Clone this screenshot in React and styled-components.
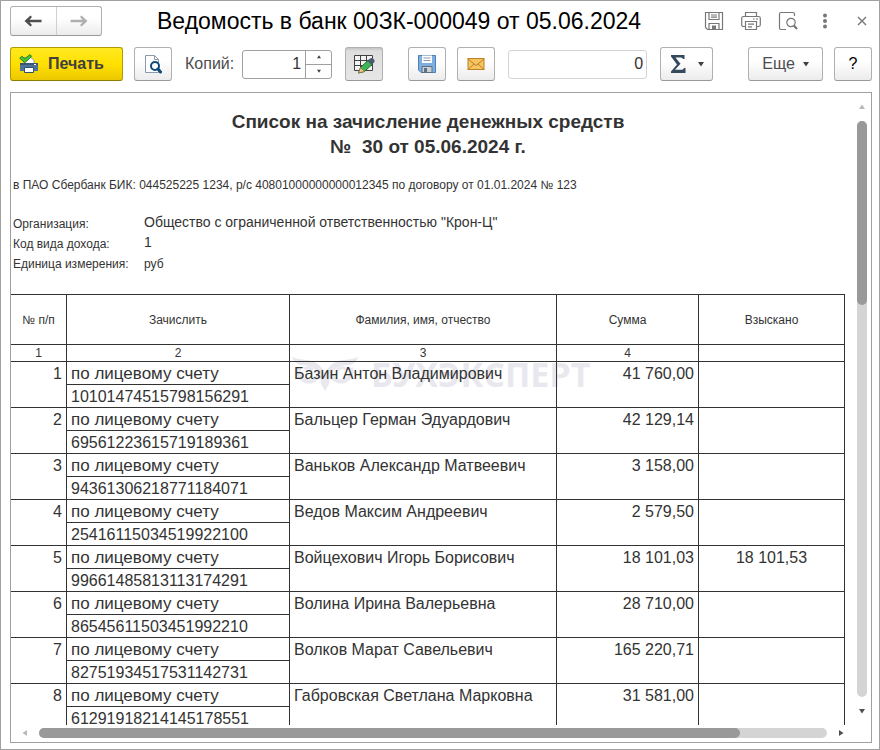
import React, { useState } from "react";
import styled, { createGlobalStyle } from "styled-components";

const rows = [
  { name: "Базин Антон Владимирович", account: "10101474515798156291", sum: "41 760,00" },
  { name: "Бальцер Герман Эдуардович", account: "69561223615719189361", sum: "42 129,14" },
  { name: "Ваньков Александр Матвеевич", account: "94361306218771184071", sum: "3 158,00" },
  { name: "Ведов Максим Андреевич", account: "25416115034519922100", sum: "2 579,50" },
  { name: "Войцехович Игорь Борисович", account: "99661485813113174291", sum: "18 101,03", held: "18 101,53" },
  { name: "Волина Ирина Валерьевна", account: "86545611503451992210", sum: "28 710,00" },
  { name: "Волков Марат Савельевич", account: "82751934517531142731", sum: "165 220,71" },
  { name: "Габровская Светлана Марковна", account: "61291918214145178551", sum: "31 581,00" },
];

const ArrowIcon = ({ flip, color }) => (
  <svg width="18" height="12" viewBox="0 0 18 12">
    <g transform={flip ? "translate(18 0) scale(-1 1)" : undefined}>
      <path d="M0.500 6 6.500 0.500 8 2 5.500 4.700H17.500V7.300H5.500L8 10 6.500 11.500Z" fill={color} />
    </g>
  </svg>
);

const PrintIcon = () => (
  <svg width="20" height="20" viewBox="0 0 20 20">
    <path d="M5 3.500h7l3 3v3H5z" fill="#fff" stroke="#9a9a9a" />
    <path d="M1 9h17a1 1 0 0 1 1 1v7H1z" fill="#4f7299" />
    <path d="M1 9h17a1 1 0 0 1 1 1v1H1z" fill="#3a5676" />
    <path d="M15 10h2v1h-2z" fill="#fff" />
    <path d="M5.500 13.500h9v5h-9z" fill="#fff" stroke="#33506f" />
    <path d="M.7 4.200 2.800 2.200l3 2.500L11 .6l1.700 1.800-6.800 6.300z" fill="#4fc232" stroke="#26821a" />
  </svg>
);

const PreviewIcon = () => (
  <svg width="18" height="20" viewBox="0 0 18 20">
    <path d="M1.500 1.500h9l4 4v13h-13z" fill="#fff" stroke="#8c99a8" />
    <path d="M10.500 1.500v4h4" fill="none" stroke="#8c99a8" />
    <circle cx="11" cy="12" r="4" fill="#fff" stroke="#0d4a7a" strokeWidth="2" />
    <path d="m14 15 2.500 3" stroke="#0d4a7a" strokeWidth="3" strokeLinecap="round" />
  </svg>
);

const EditTableIcon = () => (
  <svg width="22" height="20" viewBox="0 0 22 20">
    <path d="M1.500 1.500h18v15h-18z" fill="#f3f3f3" stroke="#404040" />
    <path d="M1.500 6.500h18M1.500 11.500h18M7.500 1.500v15M13.500 1.500v15" stroke="#404040" />
    <path d="m5.500 19 2-5.500 8-7.500 4 4-8 7.500z" fill="#3fb653" stroke="#1f6b33" />
    <path d="m5.500 19 2-5.500 4 4z" fill="#edc58d" stroke="#94693a" strokeWidth=".7" />
    <path d="m14.500 7 2.500-2.500q1.500-1 3.500.5t.5 3.500L18.500 11z" fill="#4b5a6c" />
  </svg>
);

const FloppyIcon = () => (
  <svg width="20" height="20" viewBox="0 0 20 20">
    <path d="M1.500 1.500h17v17H4l-2.500-2.500z" fill="#7faee0" stroke="#4f7fb5" />
    <path d="M5 1.500h10V9H5z" fill="#fff" />
    <path d="M6.500 4h7M6.500 6.500h7" stroke="#8a9aae" />
    <path d="M5 12.500h10v6H5z" fill="#c9d0d6" stroke="#5a7083" />
    <path d="M7 14h3v4H7z" fill="#5a7083" />
  </svg>
);

const MailIcon = () => (
  <svg width="18" height="14" viewBox="0 0 18 14">
    <rect x="1" y="1.500" width="16" height="11" fill="#f6c561" stroke="#bd7f24" />
    <path d="m1 2 8 6.500L17 2M1 12.500l6-5.500M17 12.500 11 7" fill="none" stroke="#bd7f24" />
  </svg>
);

const SigmaIcon = () => (
  <svg width="16" height="20" viewBox="0 0 16 20">
    <path d="M1 1h13.500v4H13q-.4-1.500-2-1.500H5.500l5 6.200-5.500 6h7q1.500 0 2-1.700h1.500V19H1v-1.500l6-7L1 2.500z" fill="#34495e" />
  </svg>
);

const OutlineFloppy = () => (
  <svg width="20" height="20" viewBox="0 0 20 20" fill="none" stroke="#777">
    <path d="M1.500 1.500h17v17H3.500l-2-2zM5 1.500v7h10v-7M7 4h6M7 6.200h6M5 18.500v-6h10v6" strokeWidth="1.200" />
    <path d="M8 14.500h4V18H8z" fill="#777" stroke="none" />
  </svg>
);

const OutlinePrinter = () => (
  <svg width="20" height="20" viewBox="0 0 20 20" fill="none" stroke="#777" strokeWidth="1.200">
    <path d="M4.500 5.500v-4h11v4M4.500 15.500h-2q-1.800 0-1.800-1.800V7.300q0-1.800 1.800-1.800h15q1.800 0 1.800 1.800v6.400q0 1.800-1.800 1.800h-2M4.500 10.500h11v8h-11zM7 13.200h6M7 15.800h4M12 8h1.500M15 8h2" />
  </svg>
);

const OutlinePreview = () => (
  <svg width="20" height="20" viewBox="0 0 20 20" fill="none" stroke="#777" strokeWidth="1.200">
    <path d="M8 18.500H3q-1.500 0-1.500-1.500V3q0-1.500 1.500-1.500h12q1.500 0 1.500 1.500v2" />
    <circle cx="13" cy="11.500" r="4.200" />
    <path d="m15.800 14.500 3.200 3.500" strokeWidth="2.200" />
  </svg>
);

const DotsIcon = () => (
  <svg width="6" height="16" viewBox="0 0 6 16" fill="#777">
    <circle cx="3" cy="2.500" r="2" />
    <circle cx="3" cy="8" r="2" />
    <circle cx="3" cy="13.500" r="2" />
  </svg>
);

const CloseIcon = () => (
  <svg width="10" height="10" viewBox="0 0 10 10">
    <path d="m1 1 8 8M9 1 1 9" stroke="#777" strokeWidth="1.400" />
  </svg>
);

const OwlLogo = () => (
  <svg width="68" height="36" viewBox="0 0 68 36">
    <g fill="#e8e8ee">
      <path d="M1 1q7 3 14 3 14 1 19 14Q39 5 53 4q7 0 14-3-2 6-8 8-14-1-20 11l-1 8-4 7-4-7-1-8Q23 8 9 9 3 7 1 1Z" />
    </g>
    <g fill="none" stroke="#e8e8ee" strokeWidth="4">
      <path d="M8 12a10 10 0 1 0 20 6" />
      <path d="M60 12a10 10 0 1 1-20 6" />
      <path d="M13 13q4-3 9 1M55 13q-4-3-9 1" strokeWidth="3" />
    </g>
  </svg>
);

const Triangle = ({ dir = "down", color = "#404040", size = 6 }) => {
  const turn = { down: 0, left: 90, up: 180, right: 270 }[dir];
  return (
    <svg width={size} height={size} viewBox="0 0 6 6">
      <path d="M0 1h6L3 5.500z" fill={color} transform={`rotate(${turn} 3 3)`} />
    </svg>
  );
};

const App = () => {
  const [copies, setCopies] = useState(1);

  return (
    <Window>
      <GlobalStyle />
      <TitleBar>
        <NavGroup>
          <NavButton aria-label="Назад">
            <ArrowIcon color="#4d4d4d" />
          </NavButton>
          <NavButton aria-label="Вперед">
            <ArrowIcon flip color="#b0b0b0" />
          </NavButton>
        </NavGroup>
        <Title>Ведомость в банк 00ЗК-000049 от 05.06.2024</Title>
        <WindowActions>
          <IconButton aria-label="Сохранить"><OutlineFloppy /></IconButton>
          <IconButton aria-label="Печать"><OutlinePrinter /></IconButton>
          <IconButton aria-label="Просмотр"><OutlinePreview /></IconButton>
          <IconButton aria-label="Меню"><DotsIcon /></IconButton>
          <IconButton aria-label="Закрыть"><CloseIcon /></IconButton>
        </WindowActions>
      </TitleBar>

      <Toolbar>
        <PrintButton>
          <PrintIcon />
          Печать
        </PrintButton>
        <ToolButton $width={38} aria-label="Предварительный просмотр">
          <PreviewIcon />
        </ToolButton>
        <CopiesLabel htmlFor="copies">Копий:</CopiesLabel>
        <Stepper>
          <StepperInput
            id="copies"
            value={copies}
            onChange={(e) => setCopies(parseInt(e.target.value) || 0)}
          />
          <StepperButtons>
            <StepButton aria-label="Больше" onClick={() => setCopies(copies + 1)}>
              <Triangle dir="up" size={4} />
            </StepButton>
            <StepButton aria-label="Меньше" onClick={() => setCopies(Math.max(1, copies - 1))}>
              <Triangle size={4} />
            </StepButton>
          </StepperButtons>
        </Stepper>
        <ToolGroup $left={13} $right={25}>
          <ToolButton $width={38} $pressed aria-label="Редактирование">
            <EditTableIcon />
          </ToolButton>
        </ToolGroup>
        <ToolGroup $right={13}>
          <ToolButton $width={38} aria-label="Сохранить в файл">
            <FloppyIcon />
          </ToolButton>
          <ToolButton $width={38} aria-label="Отправить">
            <MailIcon />
          </ToolButton>
        </ToolGroup>
        <TotalInput aria-label="Сумма" defaultValue="0" />
        <ToolButton $width={53} $gap={12} aria-label="Вычислить сумму">
          <SigmaIcon />
          <Triangle />
        </ToolButton>
        <RightTools>
          <ToolButton $width={75} $gap={8}>
            Еще
            <Triangle />
          </ToolButton>
          <ToolButton $width={38} $dark>?</ToolButton>
        </RightTools>
      </Toolbar>

      <Sheet>
        <Page>
          <Heading>
            Список на зачисление денежных средств
            <br />№&nbsp; 30 от 05.06.2024 г.
          </Heading>
          <BankLine>
            в ПАО Сбербанк БИК: 044525225 1234, р/с 40801000000000012345 по договору от 01.01.2024 № 123
          </BankLine>
          <Details>
            <dt>Организация:</dt>
            <DetailValue $large>Общество с ограниченной ответственностью "Крон-Ц"</DetailValue>
            <dt>Код вида дохода:</dt>
            <DetailValue $large>1</DetailValue>
            <dt>Единица измерения:</dt>
            <DetailValue>руб</DetailValue>
          </Details>
          <TableArea>
            <Watermark aria-hidden="true">
              <OwlLogo />
              БУХЭКСПЕРТ
            </Watermark>
            <Table>
              <colgroup>
                <Col $width={56} />
                <Col $width={223} />
                <col />
                <Col $width={142} />
                <Col $width={146} />
              </colgroup>
              <thead>
                <tr>
                  <HeadCell>№ п/п</HeadCell>
                  <HeadCell>Зачислить</HeadCell>
                  <HeadCell>Фамилия, имя, отчество</HeadCell>
                  <HeadCell>Сумма</HeadCell>
                  <HeadCell>Взыскано</HeadCell>
                </tr>
                <tr>
                  <NumberCell>1</NumberCell>
                  <NumberCell>2</NumberCell>
                  <NumberCell>3</NumberCell>
                  <NumberCell>4</NumberCell>
                  <NumberCell />
                </tr>
              </thead>
              <tbody>
                {rows.map((row, i) => (
                  <React.Fragment key={row.account}>
                    <tr>
                      <Cell rowSpan={2} $align="right">{i + 1}</Cell>
                      <Cell $large>по лицевому счету</Cell>
                      <Cell rowSpan={2}>{row.name}</Cell>
                      <Cell rowSpan={2} $align="right">{row.sum}</Cell>
                      <Cell rowSpan={2} $align="center">{row.held}</Cell>
                    </tr>
                    <tr>
                      <Cell>{row.account}</Cell>
                    </tr>
                  </React.Fragment>
                ))}
              </tbody>
            </Table>
          </TableArea>
        </Page>
        <VerticalBar>
          <Triangle dir="up" color="#b8b8b8" />
          <VerticalTrack>
            <VerticalThumb />
          </VerticalTrack>
          <Triangle color="#505050" />
        </VerticalBar>
        <HorizontalBar>
          <Triangle dir="left" color="#b8b8b8" />
          <HorizontalTrack>
            <HorizontalThumb />
          </HorizontalTrack>
          <Triangle dir="right" color="#505050" />
        </HorizontalBar>
      </Sheet>
    </Window>
  );
};

const GlobalStyle = createGlobalStyle`
  * {
    box-sizing: border-box;
  }

  body {
    margin: 0;
    background: #fff;
    font-family: "Liberation Sans", Arial, sans-serif;
  }

  button, input {
    font-family: inherit;
    padding: 0;
    margin: 0;
  }

  svg {
    display: block;
    flex-shrink: 0;
  }
`;

const Window = styled.div`
  display: flex;
  flex-direction: column;
  height: 100vh;
  padding: 5px 7px 6px 9px;
  border: 1px solid #a0a0a0;
`;

const TitleBar = styled.header`
  display: flex;
  align-items: center;
  height: 30px;
`;

const NavGroup = styled.div`
  display: flex;
  width: 92px;
  height: 30px;
  border: 1px solid #b0b0b0;
  border-bottom-color: #999;
  border-radius: 3px;
  background: linear-gradient(#fff 40%, #ececec);
`;

const NavButton = styled.button`
  display: flex;
  flex: 1;
  align-items: center;
  justify-content: center;
  border: none;
  background: none;

  & + & {
    border-left: 1px solid #d0d0d0;
  }
`;

const Title = styled.h1`
  flex: 1;
  margin: 0 0 0 55px;
  font-size: 23px;
  font-weight: normal;
  line-height: 30px;
  color: #000;
  white-space: nowrap;
`;

const WindowActions = styled.div`
  display: flex;
  gap: 17px;
`;

const IconButton = styled.button`
  display: flex;
  align-items: center;
  justify-content: center;
  width: 20px;
  height: 20px;
  border: none;
  background: none;
`;

const Toolbar = styled.div`
  display: flex;
  align-items: center;
  height: 34px;
  margin: 11px 0;
`;

const ToolButton = styled.button`
  display: flex;
  align-items: center;
  justify-content: center;
  gap: ${(props) => props.$gap || 0}px;
  width: ${(props) => props.$width}px;
  height: 34px;
  border: 1px solid #b0b0b0;
  border-bottom-color: #999;
  border-radius: 3px;
  background: ${(props) =>
    props.$pressed ? "linear-gradient(#c4c4c4, #dedede 10%, #e6e6e6)" : "linear-gradient(#fff 40%, #ececec)"};
  color: ${(props) => (props.$dark ? "#000" : "#4d4d4d")};
  font-size: 16px;
`;

const PrintButton = styled(ToolButton)`
  justify-content: flex-start;
  gap: 9px;
  width: 113px;
  margin-right: 11px;
  padding-left: 8px;
  border-color: #b39b00;
  border-bottom-color: #8f7c00;
  background: linear-gradient(#ffe921, #ffe000 50%, #ecc800);
  color: #404040;
  font-weight: bold;
`;

const CopiesLabel = styled.label`
  margin: 0 8px 0 13px;
  color: #4d4d4d;
  font-size: 16px;
`;

const Stepper = styled.div`
  display: flex;
  width: 90px;
  height: 29px;
  border: 1px solid #a0a0a0;
  border-radius: 3px;
`;

const StepperInput = styled.input`
  flex: 1;
  min-width: 0;
  padding-right: 4px;
  border: none;
  background: none;
  color: #333;
  font-size: 16px;
  text-align: right;
`;

const StepperButtons = styled.div`
  display: flex;
  flex-direction: column;
  width: 26px;
  border-left: 1px solid #a0a0a0;
`;

const StepButton = styled.button`
  display: flex;
  flex: 1;
  align-items: center;
  justify-content: center;
  border: none;
  background: none;

  & + & {
    border-top: 1px solid #a0a0a0;
  }
`;

const ToolGroup = styled.div`
  display: flex;
  gap: 11px;
  margin-left: ${(props) => props.$left || 0}px;
  margin-right: ${(props) => props.$right || 0}px;
`;

const TotalInput = styled.input`
  width: 139px;
  height: 29px;
  margin-right: 13px;
  padding-right: 3px;
  border: 1px solid #d4d4d4;
  border-radius: 3px;
  color: #333;
  font-size: 16px;
  text-align: right;
`;

const RightTools = styled(ToolGroup)`
  margin-left: auto;
`;

const Sheet = styled.main`
  display: grid;
  flex: 1;
  grid-template-columns: minmax(0, 1fr) 26px;
  grid-template-rows: minmax(0, 1fr) 17px;
  min-height: 0;
  border: 1px solid #a0a0a0;
`;

const Page = styled.article`
  overflow: hidden;
  padding-top: 16px;
  color: #333;
  font-size: 12px;
`;

const Heading = styled.h2`
  margin: 0 0 16px;
  font-size: 19px;
  line-height: 25px;
  text-align: center;
`;

const BankLine = styled.p`
  margin: 0 0 19px;
  padding-left: 2px;
  line-height: 20px;
  white-space: nowrap;
`;

const Details = styled.dl`
  display: grid;
  grid-template-columns: 131px 1fr;
  margin: 0 0 20px;
  padding-left: 2px;
  line-height: 20px;
`;

const DetailValue = styled.dd`
  margin: 0;
  font-size: ${(props) => (props.$large ? 14 : 12)}px;
  line-height: ${(props) => (props.$large ? 16 : 20)}px;
`;

const TableArea = styled.div`
  position: relative;
  isolation: isolate;
`;

const Watermark = styled.div`
  position: absolute;
  z-index: -1;
  top: 62px;
  left: 280px;
  display: flex;
  align-items: center;
  gap: 12px;
  color: #e8e8ee;
  font-family: "Open Sans", sans-serif;
  font-size: 34px;
  font-weight: bold;
  line-height: 36px;
`;

const Table = styled.table`
  width: 100%;
  table-layout: fixed;
  border-spacing: 0;
`;

const Col = styled.col`
  width: ${(props) => props.$width}px;
`;

const HeadCell = styled.th`
  height: 50px;
  padding: 0;
  border-top: 1px solid #333;
  border-right: 1px solid #333;
  font-size: 12px;
  font-weight: normal;
`;

const NumberCell = styled.td`
  height: 17px;
  padding: 0;
  border-top: 1px solid #333;
  border-right: 1px solid #333;
  font-size: 12px;
  line-height: 16px;
  text-align: center;
`;

const Cell = styled.td`
  height: 23px;
  padding: 2px 4px 0;
  border-top: 1px solid #333;
  border-right: 1px solid #333;
  font-size: ${(props) => (props.$large ? 17 : 16)}px;
  line-height: 20px;
  text-align: ${(props) => props.$align || "left"};
  vertical-align: top;
  white-space: nowrap;
`;

const VerticalBar = styled.div`
  display: flex;
  flex-direction: column;
  align-items: center;
  gap: 11px;
  padding: 11px 0 11px 8px;
`;

const VerticalTrack = styled.div`
  flex: 1;
  width: 10px;
  border-radius: 5px;
  background: #d4d4d4;
`;

const VerticalThumb = styled.div`
  height: 32%;
  border-radius: 5px;
  background: #999;
`;

const HorizontalBar = styled.div`
  display: flex;
  align-items: center;
  gap: 11px;
  padding: 0 1px 2px 11px;
`;

const HorizontalTrack = styled.div`
  flex: 1;
  height: 10px;
  border-radius: 5px;
  background: #d4d4d4;
`;

const HorizontalThumb = styled.div`
  width: 89%;
  height: 10px;
  border-radius: 5px;
  background: #999;
`;

export default App;
